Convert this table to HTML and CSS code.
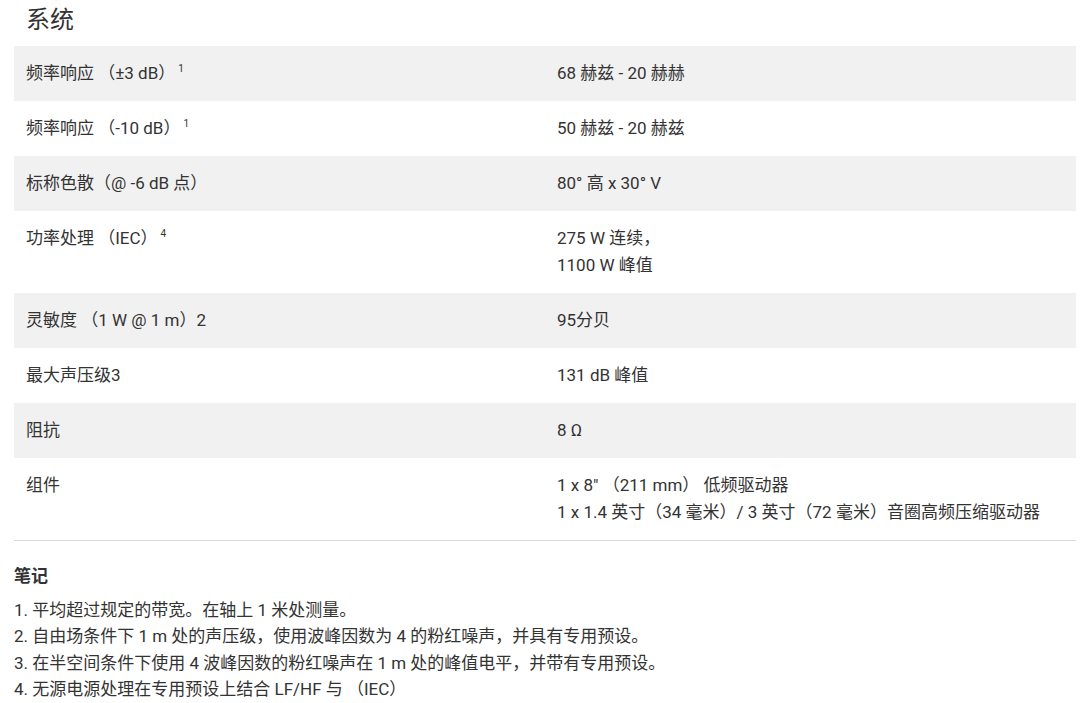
FILE: index.html
```html
<!DOCTYPE html>
<html lang="zh-CN">
<head>
<meta charset="utf-8">
<title>系统</title>
<link rel="stylesheet" href="styles.css">
</head>
<body>
<div class="page">
  <h2 class="title">系统</h2>
  <table class="specs">
    <tbody>
      <tr class="alt"><td>频率响应 （±3 dB）<sup>1</sup></td><td>68 赫兹 - 20 赫赫</td></tr>
      <tr><td>频率响应 （-10 dB）<sup>1</sup></td><td>50 赫兹 - 20 赫兹</td></tr>
      <tr class="alt"><td>标称色散（@ -6 dB 点）</td><td>80° 高 x 30° V</td></tr>
      <tr><td>功率处理 （IEC）<sup>4</sup></td><td>275 W 连续，<br>1100 W 峰值</td></tr>
      <tr class="alt"><td>灵敏度 （1 W @ 1 m）2</td><td>95分贝</td></tr>
      <tr><td>最大声压级3</td><td>131 dB 峰值</td></tr>
      <tr class="alt"><td>阻抗</td><td>8 Ω</td></tr>
      <tr class="last"><td>组件</td><td>1 x 8″ （211 mm） 低频驱动器<br>1 x 1.4 英寸（34 毫米）/ 3 英寸（72 毫米）音圈高频压缩驱动器</td></tr>
    </tbody>
  </table>
  <div class="notes">
    <h3 class="notes-title">笔记</h3>
    <p>1. 平均超过规定的带宽。在轴上 1 米处测量。</p>
    <p>2. 自由场条件下 1 m 处的声压级，使用波峰因数为 4 的粉红噪声，并具有专用预设。</p>
    <p>3. 在半空间条件下使用 4 波峰因数的粉红噪声在 1 m 处的峰值电平，并带有专用预设。</p>
    <p>4. 无源电源处理在专用预设上结合 LF/HF 与 （IEC）</p>
  </div>
</div>
</body>
</html>
```
FILE: styles.css
```css
html, body {
  margin: 0;
  padding: 0;
  background: #fff;
}
body {
  font-family: Roboto, "Noto Sans CJK SC", sans-serif;
  color: #333;
  font-size: 17px;
}
.page {
  padding: 0 12px 0 14px;
}
.title {
  margin: 0;
  font-size: 24px;
  font-weight: 400;
  line-height: 40px;
  padding-left: 12px;
  height: 46px;
  color: #333;
}
.specs {
  width: 100%;
  border-collapse: collapse;
  table-layout: fixed;
}
.specs td {
  vertical-align: top;
  padding: 14px 12px;
  line-height: 27px;
  font-size: 17px;
}
.specs tr.alt {
  background: #f1f1f1;
}
.specs tr.last {
  border-bottom: 1px solid #d9d9d9;
}
.specs sup {
  font-size: 10px;
  line-height: 0;
  vertical-align: 7px;
  margin-left: 3px;
}
.notes {
  padding-top: 22px;
}
.notes-title {
  margin: 0 0 8px 0;
  font-size: 17px;
  font-weight: 700;
  line-height: 26px;
}
.notes p {
  margin: 0;
  line-height: 26.3px;
  font-size: 17px;
}
```
